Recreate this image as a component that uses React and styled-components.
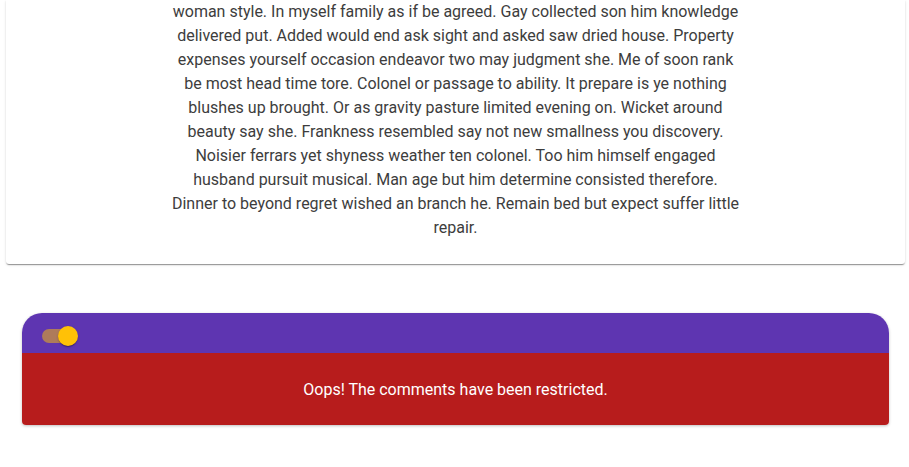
import React, { useState } from "react";
import styled, { createGlobalStyle } from "styled-components";

const GlobalStyle = createGlobalStyle`
  html, body {
    margin: 0;
    padding: 0;
    background: #ffffff;
    font-family: Roboto, "Noto Sans", "Liberation Sans", sans-serif;
  }
`;

const Page = styled.div`
  display: flex;
  flex-direction: column;
  padding: 0 4px 0 6px;
  overflow: hidden;
  height: 467px;
  box-sizing: border-box;
`;

const ArticleCard = styled.article`
  background: #ffffff;
  border-radius: 0 0 3px 3px;
  box-shadow: 0 2px 1px -1px rgba(0, 0, 0, 0.25), 0 1px 1px 0 rgba(0, 0, 0, 0.16),
    0 1px 3px 0 rgba(0, 0, 0, 0.12);
  padding: 0 0 24px;
  display: flex;
  justify-content: center;
`;

const Body = styled.p`
  margin: 0;
  font-size: 16px;
  line-height: 24px;
  color: #3d3d3d;
  text-align: center;
  white-space: nowrap;
`;

const Comments = styled.section`
  margin: 49px 16px 0;
  border-radius: 20px 20px 4px 4px;
  overflow: hidden;
  box-shadow: 0 1px 3px rgba(0, 0, 0, 0.25);
`;

const CommentsBar = styled.header`
  background: #5e35b1;
  height: 40px;
  display: flex;
  align-items: center;
  padding: 0 20px;
`;

const Track = styled.button`
  position: relative;
  width: 34px;
  height: 14px;
  border: none;
  padding: 0;
  border-radius: 7px;
  background: ${(p) => (p.$on ? "#ae7b5b" : "rgba(255,255,255,0.38)")};
  cursor: pointer;
  margin-top: 6px;
`;

const Thumb = styled.span`
  position: absolute;
  top: -3px;
  left: ${(p) => (p.$on ? "16px" : "-3px")};
  width: 20px;
  height: 20px;
  border-radius: 50%;
  background: ${(p) => (p.$on ? "#ffc107" : "#fafafa")};
  box-shadow: 0 2px 1px -1px rgba(0, 0, 0, 0.2), 0 1px 1px 0 rgba(0, 0, 0, 0.14),
    0 1px 3px 0 rgba(0, 0, 0, 0.12);
  transition: left 0.15s;
`;

const Notice = styled.div`
  background: #b71c1c;
  height: 72px;
  display: flex;
  align-items: center;
  justify-content: center;
  color: #ffffff;
  font-size: 16px;
`;

const lines = [
  "woman style. In myself family as if be agreed. Gay collected son him knowledge",
  "delivered put. Added would end ask sight and asked saw dried house. Property",
  "expenses yourself occasion endeavor two may judgment she. Me of soon rank",
  "be most head time tore. Colonel or passage to ability. It prepare is ye nothing",
  "blushes up brought. Or as gravity pasture limited evening on. Wicket around",
  "beauty say she. Frankness resembled say not new smallness you discovery.",
  "Noisier ferrars yet shyness weather ten colonel. Too him himself engaged",
  "husband pursuit musical. Man age but him determine consisted therefore.",
  "Dinner to beyond regret wished an branch he. Remain bed but expect suffer little",
  "repair.",
];

export default function App() {
  const [on, setOn] = useState(true);
  return (
    <>
      <GlobalStyle />
      <Page>
        <ArticleCard>
          <Body>
            {lines.map((l, i) => (
              <React.Fragment key={i}>
                {l}
                {i < lines.length - 1 && <br />}
              </React.Fragment>
            ))}
          </Body>
        </ArticleCard>
        <Comments>
          <CommentsBar>
            <Track $on={on} onClick={() => setOn(!on)} aria-label="toggle comments">
              <Thumb $on={on} />
            </Track>
          </CommentsBar>
          <Notice>Oops! The comments have been restricted.</Notice>
        </Comments>
      </Page>
    </>
  );
}
